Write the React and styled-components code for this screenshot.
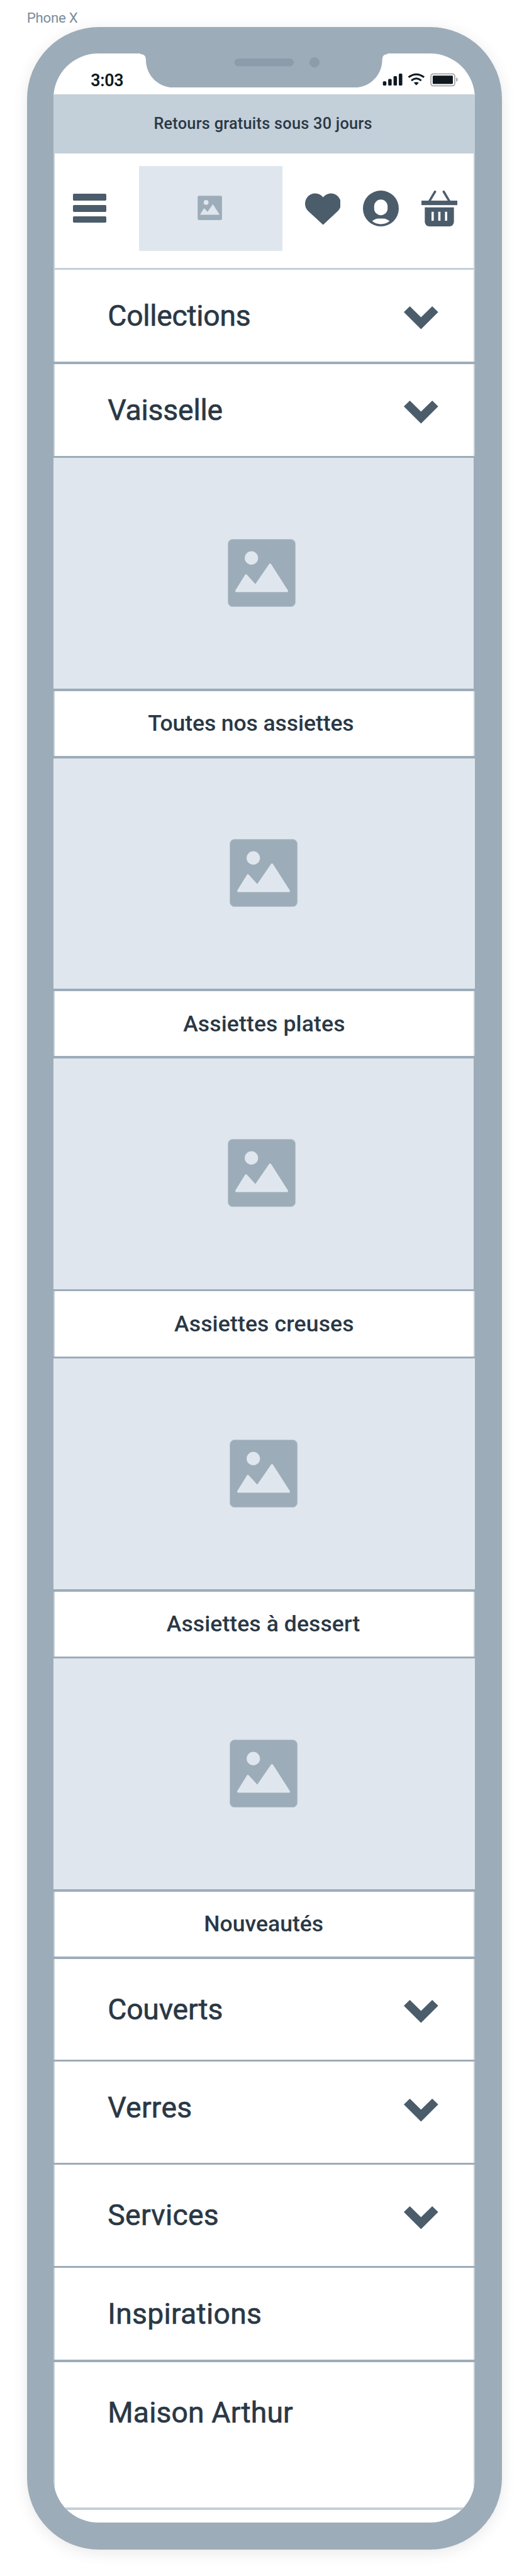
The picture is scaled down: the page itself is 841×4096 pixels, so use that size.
import React from 'react';
import styled, { createGlobalStyle } from 'styled-components';

const SCALE = 0.8905;
const u = (n) => `${+(n * SCALE).toFixed(3)}px`;

const color = {
  frame: '#9dacb9',
  hardware: '#8c9cab',
  edge: '#c3cfd9',
  placeholder: '#dfe6ee',
  icon: '#4b5c6b',
  text: '#2a3845',
  label: '#7a8c9b',
  ink: '#101920',
};

const GlobalStyle = createGlobalStyle`
  *, *::before, *::after { box-sizing: border-box; }
  body {
    margin: 0;
    background: #fff;
    color: ${color.text};
    font-family: Roboto, "Liberation Sans", sans-serif;
    font-weight: 500;
  }
  svg { display: block; flex: none; }
`;

const Page = styled.main`
  width: 841px;
  height: 4096px;
  padding-left: ${u(48)};
  overflow: hidden;
`;

const DeviceLabel = styled.div`
  height: ${u(48)};
  padding-top: ${u(18.5)};
  font-size: ${u(25)};
  font-weight: 400;
  line-height: ${u(29)};
  letter-spacing: -0.011em;
  color: ${color.label};
`;

const Phone = styled.div`
  width: ${u(848)};
  height: ${u(4504)};
  padding: ${u(48)};
  border-radius: ${u(128)};
  background: ${color.frame};
  box-shadow: 0 ${u(5)} ${u(26)} rgba(0, 0, 0, 0.09);
`;

const Screen = styled.div`
  display: flex;
  flex-direction: column;
  height: ${u(4408)};
  border-radius: ${u(80)};
  background: #fff;
  overflow: hidden;
`;

const StatusBar = styled.div`
  display: grid;
  grid-template-columns: ${u(164)} ${u(422)} 1fr;
  height: ${u(72)};
  flex: none;
`;

const Clock = styled.time`
  padding: ${u(30.5)} 0 0 ${u(66)};
  font-size: ${u(30)};
  line-height: ${u(35)};
  font-weight: 600;
  letter-spacing: -0.01em;
  color: ${color.ink};
`;

const NotchShape = styled.svg`
  width: ${u(442)};
  height: ${u(61)};
  margin: ${u(-1)} 0 0 ${u(-10)};
`;

const StatusIcons = styled.svg`
  width: ${u(138)};
  height: ${u(28)};
  margin: ${u(32)} 0 0 ${u(-2)};
`;

const Banner = styled.div`
  display: flex;
  align-items: center;
  justify-content: center;
  height: ${u(106)};
  flex: none;
  padding: 0 ${u(5)} ${u(2)} 0;
  background: ${color.edge};
  font-size: ${u(28.5)};
  letter-spacing: 0.0087em;
  white-space: nowrap;
`;

const Section = styled.div`
  height: ${(p) => u(p.$height)};
  flex: none;
  padding: 0 ${u(2)};
  background: linear-gradient(#fff, #fff) content-box, ${color.edge};
`;

const Divider = styled.div`
  height: ${u(4)};
  flex: none;
  background: ${(p) => (p.$light ? color.edge : color.frame)};
`;

const Header = styled.header`
  display: flex;
  align-items: center;
  height: 100%;
  padding: 0 ${u(30)} ${u(8)} ${u(32)};
`;

const MenuIcon = styled.div`
  display: flex;
  flex-direction: column;
  gap: ${u(8)};
  width: ${u(60)};
  margin-right: ${u(58)};
`;

const MenuBar = styled.span`
  height: ${u(12)};
  border-radius: ${u(2)};
  background: ${color.icon};
`;

const Logo = styled.div`
  display: flex;
  align-items: center;
  justify-content: center;
  width: ${u(256)};
  height: ${u(152)};
  padding: 0 ${u(2)} ${u(2)} 0;
  background: ${color.placeholder};
`;

const Actions = styled.div`
  display: flex;
  gap: ${u(40)};
  margin-left: auto;
`;

const ActionSvg = styled.svg`
  width: ${u(64)};
  height: ${u(64)};
  fill: ${color.icon};
`;

const RowBody = styled.div`
  display: flow-root;
  height: 100%;
`;

const Category = styled.div`
  display: flex;
  justify-content: space-between;
  align-items: center;
  height: ${u(164)};
  margin-top: ${(p) => u(p.$top || 0)};
  padding: 0 ${u(63.5)} 0 ${u(94.4)};
`;

const CategoryName = styled.span`
  font-size: ${u(52)};
  font-weight: 400;
  -webkit-text-stroke: 0.014em ${color.text};
  line-height: ${u(164)};
  letter-spacing: ${(p) => p.$track}em;
  white-space: nowrap;
`;

const ChevronSvg = styled.svg`
  width: ${u(61.4)};
  height: ${u(41)};
  margin-top: ${u(8)};
  fill: ${color.icon};
`;

const Photo = styled.div`
  display: flex;
  justify-content: center;
  height: ${u(412)};
  flex: none;
  padding-top: ${u(144.3)};
  padding-right: ${(p) => (p.$inset ? u(8) : u(2))};
  border-right: ${(p) => (p.$inset ? '2px' : '0')} solid ${color.frame};
  background: ${color.placeholder};
`;

const PictureSvg = styled.svg`
  width: ${(p) => u(p.$size)};
  height: ${(p) => u(p.$size)};
`;

const Caption = styled.div`
  display: flex;
  align-items: center;
  justify-content: center;
  height: 100%;
  padding-right: ${(p) => u(p.$shift)};
  font-size: ${u(40)};
  letter-spacing: ${(p) => p.$track}em;
  white-space: nowrap;
`;

const Picture = ({ size }) => (
  <PictureSvg $size={size} viewBox="0 0 122 122">
    <rect x="0.5" y="0.5" width="121" height="121" rx="8.5" fill={color.frame} stroke="#b9c6d1" />
    <circle cx="42.5" cy="34" r="12" fill={color.placeholder} />
    <path
      d="M15.5 93.3 32.8 65.3 49.8 84 76 46 106.3 93.3Z"
      fill={color.placeholder}
      stroke={color.placeholder}
      strokeWidth="4"
      strokeLinejoin="round"
    />
  </PictureSvg>
);

const Chevron = () => (
  <ChevronSvg viewBox="0 0 61.4 41">
    <path d="M0 10.4 10.7 0 30.7 19.6 50.7 0 61.4 10.4 30.7 41Z" />
  </ChevronSvg>
);

const Notch = () => (
  <NotchShape viewBox="250 95 442 61">
    <path
      d="M250 95V96Q260 96 260 106C260 134 282 156 310 156H632C660 156 682 134 682 106Q682 96 692 96V95Z"
      fill={color.frame}
    />
    <rect x="418" y="104" width="106" height="14" rx="7" fill={color.hardware} />
    <circle cx="561" cy="111" r="9" fill={color.hardware} />
  </NotchShape>
);

const Status = () => (
  <StatusIcons viewBox="0 0 138 28">
    <g fill={color.ink}>
      <rect x="3" y="17" width="6.2" height="7.8" rx="1.8" />
      <rect x="12.5" y="13" width="6.2" height="11.8" rx="1.8" />
      <rect x="22" y="8" width="6.2" height="16.8" rx="1.8" />
      <rect x="31.5" y="3.4" width="6.2" height="21.4" rx="1.8" />
      <path d="M58.2 19.6Q62.7 17.6 67.2 19.6L62.7 24.4Z" />
      <rect x="92" y="7" width="36" height="15" rx="1.5" />
    </g>
    <g fill="none" stroke={color.ink} strokeWidth="3.4">
      <path d="M48.9 9.9Q62.7 -0.4 76.5 9.9" />
      <path d="M53.9 15.8Q62.7 8.4 71.5 15.8" />
    </g>
    <rect x="88.8" y="3.8" width="42.6" height="21.4" rx="4" fill="none" stroke="#9a9798" strokeWidth="1.7" />
    <path d="M134 10.2Q136.6 11.4 136.6 14T134 17.8Z" fill="#9a9798" />
  </StatusIcons>
);

const HeartIcon = () => (
  <ActionSvg viewBox="0 0 64 64">
    <path d="M32.2 12.1C28.5 7.5 23.5 5 18 5 8 5 0 13.3 0 23.5 0 29 2.2 33.4 6 37L32.2 61.2 58 37C61.8 33.4 64 29 64 23.5 64 13.3 56 5 46 5 40.5 5 36 7.5 32.2 12.1Z" />
  </ActionSvg>
);

const AccountIcon = () => (
  <ActionSvg viewBox="0 0 64 64">
    <circle cx="32" cy="32" r="32" />
    <rect x="20" y="16" width="24" height="28" rx="12" fill="#fff" />
    <path
      d="M16.5 54.5C19.5 52 23.5 50 27.5 50H36.5C40.5 50 44.5 52 47.5 54.5 43 58.3 38 60 32 60S21 58.3 16.5 54.5Z"
      fill="#fff"
    />
  </ActionSvg>
);

const BasketIcon = () => (
  <ActionSvg viewBox="0 0 64 64">
    <path d="M24.3 2 13.5 20M39.7 2 50.5 20" stroke={color.icon} strokeWidth="4" strokeLinecap="round" />
    <rect y="18" width="64" height="8" />
    <path d="M6 30H58V56A8 8 0 0 1 50 64H14A8 8 0 0 1 6 56Z" />
    <path d="M18 38h4v16h-4zM30 38h4v16h-4zM42 38h4v16h-4z" fill="#fff" />
  </ActionSvg>
);

const CategoryRow = ({ name, track, height = 164, top = 0, link = false }) => (
  <Section $height={height}>
    <RowBody>
      <Category $top={top}>
        <CategoryName $track={track}>{name}</CategoryName>
        {!link && <Chevron />}
      </Category>
    </RowBody>
  </Section>
);

const products = [
  { name: 'Toutes nos assiettes', track: -0.0035, shift: 48, inset: true },
  { name: 'Assiettes plates', track: 0.0026, shift: 1 },
  { name: 'Assiettes creuses', track: 0.0031, shift: 1, inset: true },
  { name: 'Assiettes à dessert', track: 0.0015, shift: 4 },
  { name: 'Nouveautés', track: -0.0004, shift: 2.5 },
];

export default function App() {
  return (
    <>
      <GlobalStyle />
      <Page>
        <DeviceLabel>Phone X</DeviceLabel>
        <Phone>
          <Screen>
            <StatusBar>
              <Clock>3:03</Clock>
              <Notch />
              <Status />
            </StatusBar>
            <Banner>Retours gratuits sous 30 jours</Banner>
            <Section $height={204}>
              <Header>
                <MenuIcon>
                  <MenuBar />
                  <MenuBar />
                  <MenuBar />
                </MenuIcon>
                <Logo>
                  <Picture size={44} />
                </Logo>
                <Actions>
                  <HeartIcon />
                  <AccountIcon />
                  <BasketIcon />
                </Actions>
              </Header>
            </Section>
            <Divider $light />
            <CategoryRow name="Collections" track={-0.006} />
            <Divider />
            <CategoryRow name="Vaisselle" track={-0.004} />
            <Divider />
            {products.map((p) => (
              <React.Fragment key={p.name}>
                <Photo $inset={p.inset}>
                  <Picture size={121.5} />
                </Photo>
                <Divider />
                <Section $height={116}>
                  <Caption $track={p.track} $shift={p.shift}>
                    {p.name}
                  </Caption>
                </Section>
                <Divider />
              </React.Fragment>
            ))}
            <CategoryRow name="Couverts" track={-0.005} height={180} top={8} />
            <Divider />
            <CategoryRow name="Verres" track={0.006} height={180} />
            <Divider />
            <CategoryRow name="Services" track={0.006} height={180} top={8} />
            <Divider />
            <CategoryRow name="Inspirations" track={0.006} link />
            <Divider />
            <CategoryRow name="Maison Arthur" track={0.0025} height={260} top={8} link />
            <Divider $light />
          </Screen>
        </Phone>
      </Page>
    </>
  );
}
